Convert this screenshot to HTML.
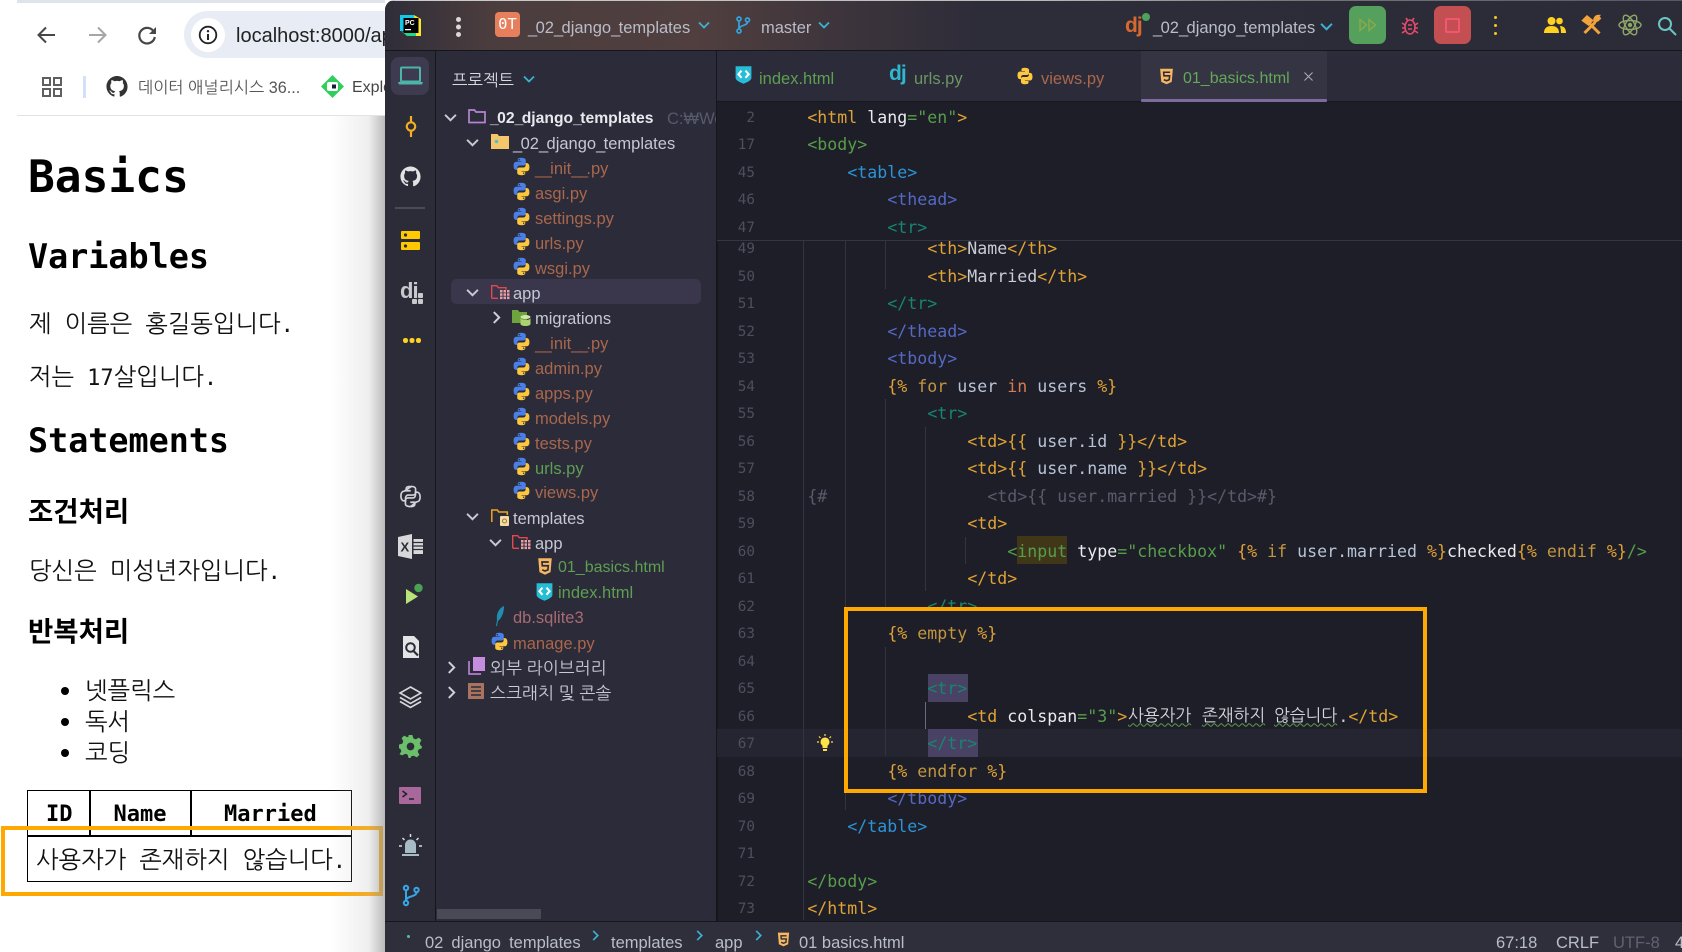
<!DOCTYPE html>
<html lang="ko"><head><meta charset="utf-8"><title>Basics</title>
<style>
html,body{margin:0;padding:0;width:1682px;height:952px;overflow:hidden;background:#fff}
body{position:relative;font-family:"Liberation Sans","NanumGothic",sans-serif}
.a{position:absolute}
.t{position:absolute;white-space:pre;line-height:28px;height:28px}
svg{position:absolute;overflow:visible}
#web .m{font-family:"DejaVu Sans Mono","NanumGothic",monospace;color:#000}
#web .k{font-family:"NanumGothic","Noto Sans CJK KR",sans-serif;font-size:24px;color:#111;margin-top:2px}
#web .sp{display:inline-block;width:13px}
#web .dot{font-family:"DejaVu Sans Mono",monospace;font-size:22px}
#ide{position:absolute;left:385px;top:0;width:1297px;height:952px;overflow:hidden;background:#1d1e28;border-top-left-radius:10px;z-index:3}
.u{color:#b9bdc9;font-size:16.5px;margin-top:1px}
.st{margin-top:2px}
.tree{color:#c5c8d2;font-size:16.5px}
.py{color:#a9674c}
.gr{color:#5e9f52}
.c{font-family:"DejaVu Sans Mono","NanumGothic",monospace;font-size:16.6px;color:#d5d8de;margin-top:1px;margin-left:-.7px}
.n{font-family:"DejaVu Sans Mono",monospace;font-size:14.3px;color:#4d4f5d;text-align:right;width:60px;left:310px;margin-top:1px}
.o{color:#e0a234}.g{color:#579e4b}.b{color:#2c93d6}.i{color:#5568c4}.e{color:#17856f}.w{color:#e9ebef}.v{color:#b7c3d6}.y{color:#c2963f}.d{color:#585b6a}.r{color:#d87a4f}.s{color:#c8ccd4}
.us{letter-spacing:-1.6px}
svg.pi{margin-top:-1.5px}
</style></head><body>
<svg width="0" height="0" style="position:absolute"><defs>
<symbol id="py" viewBox="0 0 24 24"><path fill="#4a7fe6" d="M11.9 1C7 1 7.3 3.1 7.3 3.1v2.2h4.7V6H5.4S2 5.6 2 11c0 5.4 3 5.2 3 5.2h1.8v-2.5s-.1-3 2.9-3h4.9s2.8 0 2.8-2.7V3.7S17 1 11.9 1zM9.2 2.6a.9.9 0 110 1.8.9.9 0 010-1.8z"/><path fill="#fdc83f" d="M12.1 23c4.9 0 4.6-2.1 4.6-2.1v-2.2H12V18h6.6s3.4.4 3.4-5c0-5.4-3-5.2-3-5.2h-1.8v2.5s.1 3-2.9 3H9.4s-2.8 0-2.8 2.7v4.3S7 23 12.1 23zm2.7-1.6a.9.9 0 110-1.8.9.9 0 010 1.8z"/></symbol>
<symbol id="gh" viewBox="0 0 24 24"><path fill="currentColor" d="M12 .5C5.7.5.5 5.7.5 12c0 5.1 3.3 9.4 7.9 10.9.6.1.8-.2.8-.6v-2c-3.2.7-3.9-1.5-3.9-1.5-.5-1.3-1.3-1.7-1.3-1.7-1-.7.1-.7.1-.7 1.2.1 1.8 1.2 1.8 1.2 1 1.8 2.7 1.3 3.4 1 .1-.8.4-1.3.7-1.6-2.6-.3-5.3-1.3-5.3-5.7 0-1.3.5-2.3 1.2-3.1-.1-.3-.5-1.5.1-3.1 0 0 1-.3 3.2 1.2a11 11 0 0 1 5.8 0c2.2-1.5 3.2-1.2 3.2-1.2.6 1.6.2 2.8.1 3.1.8.8 1.2 1.9 1.2 3.1 0 4.4-2.7 5.4-5.3 5.7.4.4.8 1.1.8 2.2v3.3c0 .3.2.7.8.6A11.5 11.5 0 0 0 23.5 12C23.5 5.7 18.3.5 12 .5z"/></symbol>
<symbol id="h5" viewBox="0 0 24 24"><path fill="#f6b662" d="M3 1h18l-1.6 18.5L12 23l-7.4-3.5z"/><path fill="none" stroke="#2b2b39" stroke-width="2.2" d="M17 6H8l.4 5h8l-.5 5.5L12 18l-3.8-1.5"/></symbol>
<symbol id="ix" viewBox="0 0 24 24"><path fill="#27bdd6" d="M2 1h20v14.500c0 3.500-5 5.500-10 7.500-5-2-10-4-10-7.500z"/><path fill="none" stroke="#fff" stroke-width="2.600" d="M9.500 6.500L5.500 11l4 4.500M14.500 6.500l4 4.500-4 4.500"/></symbol>
<symbol id="ch" viewBox="0 0 12 12"><path fill="none" stroke="currentColor" stroke-width="1.800" d="M1 3.500l5 5 5-5"/></symbol>
<symbol id="cr" viewBox="0 0 12 12"><path fill="none" stroke="currentColor" stroke-width="1.800" d="M3.500 1l5 5-5 5"/></symbol>
<symbol id="rf" viewBox="0 0 19 16"><path fill="none" stroke="#e3484d" stroke-width="1.400" d="M.7 14.300V1.700h5l1.600 2H15v2"/><path fill="none" stroke="#e3484d" stroke-width="1.400" d="M.7 14.300H7"/><g fill="#e9a0a4"><rect x="9" y="6" width="2.500" height="2.500"/><rect x="12.500" y="6" width="2.500" height="2.500"/><rect x="16" y="6" width="2.500" height="2.500"/><rect x="9" y="9.300" width="2.500" height="2.500"/><rect x="12.500" y="9.300" width="2.500" height="2.500"/><rect x="16" y="9.300" width="2.500" height="2.500"/><rect x="9" y="12.600" width="2.500" height="2.500"/><rect x="12.500" y="12.600" width="2.500" height="2.500"/><rect x="16" y="12.600" width="2.500" height="2.500"/></g></symbol>
</defs></svg>

<div id="web">
 <div class="a" style="left:17px;top:0;width:368px;height:3px;background:#dfe3eb"></div>
 <div class="a" style="left:17px;top:3px;width:12px;height:12px;background:#fff;border-top-left-radius:10px"></div>
 <svg style="left:35px;top:23px" width="24" height="24" viewBox="0 0 24 24" fill="none" stroke="#474747" stroke-width="2"><path d="M20 12H4M11 4.500L3.500 12l7.500 7.500"/></svg>
 <svg style="left:85px;top:23px" width="24" height="24" viewBox="0 0 24 24" fill="none" stroke="#a6a6a6" stroke-width="2"><path d="M4 12h16M13 4.500l7.500 7.500-7.500 7.500"/></svg>
 <svg style="left:135px;top:23px" width="24" height="24" viewBox="0 0 24 24" fill="none" stroke="#474747" stroke-width="2.200"><path d="M19 9a7.800 7.800 0 1 0 .8 5"/><path fill="#474747" stroke="none" d="M21 4v7h-7z"/></svg>
 <div class="a" style="left:184px;top:11px;width:240px;height:47px;background:#e8ecf5;border-radius:24px"></div>
 <div class="a" style="left:191px;top:18px;width:34px;height:34px;background:#fff;border-radius:50%"></div>
 <svg style="left:198px;top:25px" width="20" height="20" viewBox="0 0 20 20"><circle cx="10" cy="10" r="8.300" fill="none" stroke="#222" stroke-width="1.800"/><path d="M10 9v6" stroke="#222" stroke-width="2"/><circle cx="10" cy="6.200" r="1.200" fill="#222"/></svg>
 <div class="t" style="left:236px;top:22px;font-size:20px;color:#222">localhost:8000/ap</div>
 <svg style="left:42px;top:77px" width="20" height="20" viewBox="0 0 20 20" fill="none" stroke="#5f5f5f" stroke-width="2"><rect x="1" y="1" width="7" height="7"/><rect x="12" y="1" width="7" height="7"/><rect x="1" y="12" width="7" height="7"/><rect x="12" y="12" width="7" height="7"/></svg>
 <div class="a" style="left:83px;top:76px;width:3px;height:22px;background:#d3e1f8"></div>
 <svg style="left:106px;top:75px;color:#333" width="22" height="23"><use href="#gh"/></svg>
 <div class="t" style="left:138px;top:74px;font-size:16.200px;color:#555">데이터 애널리시스 36...</div>
 <svg style="left:321px;top:75px" width="23" height="23" viewBox="0 0 23 23"><path fill="#2fce5f" d="M11.500 0L23 11.500 11.500 23 0 11.500z"/><rect x="6" y="7" width="11" height="9" rx="2" fill="#fff"/><rect x="11" y="9.500" width="4" height="4" fill="#123"/></svg>
 <div class="t" style="left:352px;top:74px;font-size:16px;color:#444">Explore</div>
 <div class="a" style="left:17px;top:115px;width:368px;height:1px;background:#e3e3e3"></div>

 <div class="t m" style="left:28px;top:148px;font-size:44.500px;font-weight:bold;line-height:60px;height:60px">Basics</div>
 <div class="t m" style="left:28px;top:234px;font-size:33.400px;font-weight:bold;line-height:46px;height:46px">Variables</div>
 <div class="t m" style="left:28px;top:418px;font-size:33.400px;font-weight:bold;line-height:46px;height:46px">Statements</div>
 <div class="t k" style="left:29px;top:308px">제<span class="sp"></span>이름은<span class="sp"></span>홍길동입니다<span class="dot">.</span></div>
 <div class="t k" style="left:29px;top:361px">저는<span class="sp"></span><span class="dot">17</span>살입니다<span class="dot">.</span></div>
 <div class="t m" style="left:28px;top:495px;font-family:'Noto Sans CJK KR',sans-serif;font-size:27.500px;font-weight:bold;letter-spacing:0">조건처리</div>
 <div class="t k" style="left:29px;top:555px">당신은<span class="sp"></span>미성년자입니다<span class="dot">.</span></div>
 <div class="t m" style="left:28px;top:615px;font-family:'Noto Sans CJK KR',sans-serif;font-size:27.500px;font-weight:bold">반복처리</div>
 <div class="a" style="left:61px;top:687px;width:8px;height:8px;border-radius:50%;background:#000"></div>
 <div class="a" style="left:61px;top:718px;width:8px;height:8px;border-radius:50%;background:#000"></div>
 <div class="a" style="left:61px;top:749px;width:8px;height:8px;border-radius:50%;background:#000"></div>
 <div class="t k" style="left:85px;top:675px">넷플릭스</div>
 <div class="t k" style="left:85px;top:706px">독서</div>
 <div class="t k" style="left:85px;top:737px">코딩</div>

 <div class="a" style="left:27px;top:790px;width:323px;height:90px;border:1.500px solid #000"></div>
 <div class="a" style="left:27px;top:835px;width:325px;height:1.500px;background:#000"></div>
 <div class="a" style="left:89px;top:790px;width:1.500px;height:45px;background:#000"></div>
 <div class="a" style="left:190px;top:790px;width:1.500px;height:45px;background:#000"></div>
 <div class="t m" style="left:46px;top:801px;font-size:22px;font-weight:bold">ID</div>
 <div class="t m" style="left:113.500px;top:801px;font-size:22px;font-weight:bold">Name</div>
 <div class="t m" style="left:224px;top:801px;font-size:22px;font-weight:bold">Married</div>
 <div class="t k" style="left:36px;top:844px">사용자가<span class="sp"></span>존재하지<span class="sp"></span>않습니다<span class="dot">.</span></div>
 <div class="a" style="left:1px;top:826px;width:382px;height:70px;border:4px solid #ffa800;box-sizing:border-box"></div>
 <div class="a" style="left:330px;top:116px;width:55px;height:836px;background:linear-gradient(90deg,rgba(200,200,200,0),rgba(190,190,190,.25) 70%,rgba(150,150,150,.65))"></div>
</div>

<div id="ide">
 <div class="a" style="left:0;top:0;width:1297px;height:1px;background:linear-gradient(90deg,#ccc,#bbb 50%,#777 70%,#556 100%)"></div>
 <div class="a" style="left:0;top:1px;width:1297px;height:49px;background:linear-gradient(90deg,#2f2d39,#4b3d3e 8%,#513f3f 24%,#40363c 33%,#2d2c39 46%,#2c2c39)"></div>
 <div class="a" style="left:0;top:50px;width:1297px;height:1.500px;background:#15151c"></div>
 <div class="a" style="left:0;top:51px;width:50px;height:870px;background:#2c2c39"></div>
 <div class="a" style="left:50px;top:51px;width:1.500px;height:870px;background:#15151c"></div>
 <div class="a" style="left:51px;top:51px;width:280px;height:870px;background:#2b2b39"></div>
 <div class="a" style="left:331px;top:51px;width:1.500px;height:870px;background:#15151c"></div>
 <div class="a" style="left:332px;top:51px;width:965px;height:50px;background:#2b2b39"></div>
 <div class="a" style="left:332px;top:101px;width:965px;height:1px;background:#16161d"></div>

 <!-- title bar -->
 <svg style="left:15px;top:15px" width="21" height="21" viewBox="0 0 21 21"><path fill="#16c8e8" d="M0 0h14v6H6v10H0z"/><path fill="#fbe332" d="M14 0l7 4v17h-6z"/><path fill="#21d789" d="M1 16l6 5h9v-3H6z"/><rect x="3.500" y="3" width="15" height="15" fill="#000"/><text x="5" y="10" font-size="7" font-weight="bold" fill="#fff" font-family="Liberation Sans">PC</text><rect x="5" y="14" width="6" height="1.300" fill="#fff"/></svg>
 <div class="a" style="left:71px;top:17px;width:5px;height:5px;border-radius:50%;background:#d9d9d9;box-shadow:0 7.500px 0 #d9d9d9,0 15px 0 #d9d9d9"></div>
 <div class="a" style="left:110px;top:12px;width:25px;height:25px;background:#e87f5c;border-radius:4px;color:#fff;font:15.500px/25px 'DejaVu Sans Mono',monospace;text-align:center">0T</div>
 <div class="t u" style="left:143px;top:13px"><span class="us">_</span>02<span class="us">_</span>django<span class="us">_</span>templates</div>
 <svg style="left:313px;top:19px;color:#3ab3d3" width="12" height="12"><use href="#ch"/></svg>
 <svg style="left:350px;top:16px" width="16" height="18" viewBox="0 0 16 18" fill="none" stroke="#34a3dc" stroke-width="1.700"><circle cx="4" cy="3" r="2"/><circle cx="4" cy="15" r="2"/><circle cx="12.500" cy="4" r="2"/><path d="M4 5v8M12.500 6c0 4-8.500 3-8.500 7"/></svg>
 <div class="t u" style="left:376px;top:13px">master</div>
 <svg style="left:433px;top:19px;color:#3ab3d3" width="12" height="12"><use href="#ch"/></svg>
 <div class="t" style="left:740px;top:12px;color:#d8692e;font:bold 21px/28px 'Liberation Sans',sans-serif;letter-spacing:-1px">dj</div>
 <div class="a" style="left:757px;top:13px;width:8px;height:8px;border-radius:50%;background:#4ca35a"></div>
 <div class="t u" style="left:768px;top:13px"><span class="us">_</span>02<span class="us">_</span>django<span class="us">_</span>templates</div>
 <svg style="left:935px;top:20px;color:#3ab3d3" width="13" height="13"><use href="#ch"/></svg>
 <div class="a" style="left:964px;top:6px;width:37px;height:38px;border-radius:7px;background:#55a05c"></div>
 <svg style="left:974px;top:18px" width="18" height="14" viewBox="0 0 18 14" fill="none" stroke="#86ab4b" stroke-width="1.500"><path d="M1 1.500l6.500 5.500L1 12.500zM10 1.500l6.500 5.500-6.500 5.500z"/></svg>
 <svg style="left:1016px;top:16px" width="18" height="20" viewBox="0 0 18 20" fill="none" stroke="#e74a6b" stroke-width="1.600"><ellipse cx="9" cy="11" rx="5" ry="7"/><path d="M5 2l2 3M13 2l-2 3M1 7l3 2M17 7l-3 2M1 12h3M17 12h-3M1 17l3-2M17 17l-3-2M7 9h4M7 13h4"/></svg>
 <div class="a" style="left:1049px;top:6px;width:37px;height:38px;border-radius:7px;background:#c44f52"></div>
 <div class="a" style="left:1060px;top:18px;width:11px;height:11px;border:2px solid #f3566f;border-radius:2px"></div>
 <div class="a" style="left:1108.500px;top:16px;width:3px;height:3px;border-radius:50%;background:#f2c91c;box-shadow:0 8px 0 #f2c91c,0 16px 0 #f2c91c"></div>
 <svg style="left:1159px;top:16px" width="22" height="18" viewBox="0 0 22 18" fill="#ffd21f"><circle cx="7.500" cy="5" r="4"/><circle cx="15.500" cy="5" r="3.300"/><path d="M0 17c0-5 3-7 7.500-7s7.500 2 7.500 7zM16 10c4 0 6 2.500 6 7h-5c0-3-.5-5-1-7z"/></svg>
 <svg style="left:1197px;top:15px" width="20" height="20" viewBox="0 0 20 20" fill="none" stroke="#f2a33c"><path stroke-width="3" d="M7 8L17.500 18.500"/><path stroke-width="2.200" d="M1 5.500L5 1.500l5 4-3.500 4z" fill="#f2a33c"/><path stroke-width="3" d="M13 7.500L2.500 18"/><path stroke-width="2.400" d="M18.500 2.500l-2.500 2.500-1.500-1.500 2-2.500a4 4 0 0 0-3.500 6z"/></svg>
 <svg style="left:1233px;top:13px" width="24" height="24" viewBox="0 0 24 24" fill="none" stroke="#8ea667" stroke-width="1.400"><ellipse cx="12" cy="12" rx="11" ry="4.500"/><ellipse cx="12" cy="12" rx="11" ry="4.500" transform="rotate(60 12 12)"/><ellipse cx="12" cy="12" rx="11" ry="4.500" transform="rotate(120 12 12)"/><circle cx="12" cy="12" r="1.500" fill="#8ea667"/></svg>
 <svg style="left:1272px;top:16px" width="20" height="20" viewBox="0 0 20 20" fill="none" stroke="#6cc5c4" stroke-width="2"><circle cx="8" cy="8" r="6"/><path d="M12.500 12.500L19 19"/></svg>

 <!-- left stripe -->
 <div class="a" style="left:6px;top:57px;width:38px;height:38px;border-radius:8px;background:#3e3a50"></div>
 <svg style="left:13px;top:66px" width="25" height="20" viewBox="0 0 25 20"><rect x="3" y="1.500" width="19" height="14" rx="1" fill="none" stroke="#4ab5a8" stroke-width="2"/><path fill="#4ab5a8" d="M0 16h25l-1 2.500H1z"/></svg>
 <svg style="left:19px;top:116px" width="14" height="21" viewBox="0 0 14 21" fill="none" stroke="#f3ae22" stroke-width="2.200"><circle cx="7" cy="10.500" r="4.200"/><path d="M7 0v6M7 15v6"/></svg>
 <svg style="left:15px;top:166px;color:#e2e2e4" width="21" height="21"><use href="#gh"/></svg>
 <div class="a" style="left:10px;top:207px;width:30px;height:2px;background:#4a4a59"></div>
 <svg style="left:16px;top:231px" width="19" height="19" viewBox="0 0 19 19" fill="#ffc800"><rect width="19" height="8" rx="1"/><rect y="11" width="19" height="8" rx="1"/><circle cx="4.500" cy="4" r="1.600" fill="#2c2c39"/><circle cx="4.500" cy="15" r="1.600" fill="#2c2c39"/></svg>
 <div class="t" style="left:15px;top:277px;color:#c8c9cd;font:bold 22px/28px 'Liberation Sans',sans-serif;letter-spacing:-1px">di</div>
 <div class="a" style="left:33px;top:293px;width:5px;height:5px;background:#c8c9cd;border-radius:1px;box-shadow:-6px 6px 0 #c8c9cd,0 6px 0 #c8c9cd"></div>
 <div class="a" style="left:18px;top:338px;width:4.500px;height:4.500px;border-radius:50%;background:#ffd21f;box-shadow:6.500px 0 0 #ffd21f,13px 0 0 #ffd21f"></div>
 <svg style="left:14px;top:485px" width="23" height="23" viewBox="0 0 24 24" fill="none" stroke="#d3d4d8" stroke-width="1.700"><path d="M11.900 1.500C7.500 1.500 7.500 3.500 7.500 3.500v2.500h4.700M5.400 6.500C4 6.500 2 7.500 2 11.500s2 5 3 5h1.800v-2.500s0-3.500 3-3.500h4.700s2.800 0 2.800-2.500V4s0-2.500-4.400-2.500z"/><path d="M12.100 22.500c4.400 0 4.400-2 4.400-2V18h-4.700M18.600 17.500c1.400 0 3.400-1 3.400-5s-2-5-3-5h-1.800V10s0 3.500-3 3.500H9.500s-2.800 0-2.800 2.500v4s0 2.500 5.400 2.500z"/></svg>
 <svg style="left:13px;top:534px" width="25" height="25" viewBox="0 0 25 25"><path fill="#d8d8db" d="M0 3l14-3v25L0 22z"/><text x="2.500" y="17.500" font-size="13" font-weight="bold" fill="#2c2c39" font-family="Liberation Sans">X</text><rect x="15.500" y="5" width="9.500" height="15" fill="#d8d8db"/><path stroke="#2c2c39" stroke-width="1.200" d="M15.500 8.500h9.500M15.500 12h9.500M15.500 15.500h9.500"/></svg>
 <svg style="left:21px;top:584px" width="17" height="21" viewBox="0 0 17 21"><path fill="#b7e479" d="M0 5l12 7.500L0 20z"/><circle cx="12.500" cy="4" r="4.200" fill="#4aa152"/></svg>
 <svg style="left:17px;top:636px" width="18" height="22" viewBox="0 0 18 22"><path fill="#e4e4e6" d="M1 0h11l5 5v17H1z"/><circle cx="8.500" cy="11.500" r="4.300" fill="none" stroke="#2c2c39" stroke-width="2"/><path d="M11.500 15l4.500 4.500" stroke="#2c2c39" stroke-width="2.200"/></svg>
 <svg style="left:14px;top:686px" width="23" height="22" viewBox="0 0 23 22" fill="none" stroke="#d8d8dc" stroke-width="1.600"><path d="M11.500 1L22 7l-10.500 6L1 7z"/><path d="M1 11.500l10.500 6 10.500-6M1 15.500l10.500 6 10.500-6"/></svg>
 <svg style="left:14px;top:735px" width="23" height="23" viewBox="0 0 24 24"><path fill="#6bbf6a" d="M10 0h4l1 3.500 2.500 1 3.200-1.800 2.700 2.700-1.800 3.200 1 2.500L24 12v0l-.4 2-3.100 1-1 2.500 1.800 3.200-2.700 2.700-3.200-1.800-2.400.4-1 2H10l-1-3.500-2.500-1-3.200 1.800L.6 20.100l1.800-3.200-1-2.500L0 14v-4l3.500-1 1-2.500L2.700 3.300l2.700-2.700 3.200 1.800 1.400-.9z"/><circle cx="12" cy="12" r="4" fill="#2c2c39"/></svg>
 <div class="a" style="left:14px;top:787px;width:22px;height:17px;background:#a9689c;border-radius:1px"></div>
 <svg style="left:17px;top:790px" width="16" height="11" viewBox="0 0 16 11" fill="none" stroke="#222" stroke-width="1.500"><path d="M.5 1l4 3-4 3M7 9h5"/></svg>
 <svg style="left:14px;top:834px" width="23" height="24" viewBox="0 0 23 24"><path fill="#a8bcc6" d="M6 19v-8a5.500 5.500 0 0 1 11 0v8z"/><rect x="3" y="20" width="17" height="2" fill="#a8bcc6"/><path stroke="#d4dde2" stroke-width="1.500" d="M0 12h3M20 12h3M3.500 4l2 2M19.500 4l-2 2M11.500 0v3"/></svg>
 <svg style="left:17px;top:885px" width="18" height="21" viewBox="0 0 18 21" fill="none" stroke="#35a7e6" stroke-width="2"><circle cx="4" cy="3" r="2.200"/><circle cx="4" cy="18" r="2.200"/><circle cx="14.500" cy="5" r="2.200"/><path d="M4 5.200v10.600M14.500 7.200c0 5-10.500 3.500-10.500 8.600"/></svg>

 <!-- project panel -->
 <div class="t" style="left:67px;top:67px;color:#d8dae2;font:16.500px/28px 'NanumGothic','Noto Sans CJK KR',sans-serif">프로젝트</div>
 <svg style="left:138px;top:73px;color:#3ab3d3" width="12" height="12"><use href="#ch"/></svg>
 <div class="a" style="left:66px;top:279px;width:250px;height:25px;border-radius:5px;background:#3a364b"></div>

 <svg style="left:59px;top:111px;color:#c8c9d0" width="13" height="13"><use href="#ch"/></svg>
 <svg style="left:83px;top:108px" width="18" height="16" viewBox="0 0 18 16" fill="none" stroke="#b685d2" stroke-width="1.700"><path d="M1 14.500V2h5.500l1.500 2h9v10.500z"/></svg>
 <div class="t" style="left:105px;top:105px;color:#e8e9ee;font-size:15.700px;font-weight:bold"><span class="us">_</span>02<span class="us">_</span>django<span class="us">_</span>templates</div>
 <div class="t" style="left:282px;top:105px;width:49px;overflow:hidden;color:#575a6a;font-size:16.500px">C:₩Work</div>

 <svg style="left:81px;top:136px;color:#c8c9d0" width="13" height="13"><use href="#ch"/></svg>
 <svg style="left:106px;top:134px" width="18" height="15" viewBox="0 0 18 15"><path fill="#f6c76a" d="M0 15V0h6.500l1.500 2h10v13z"/><circle cx="5.500" cy="7.500" r="1.800" fill="#4fc0cf"/></svg>
 <div class="t tree" style="left:128px;top:130px"><span class="us">_</span>02<span class="us">_</span>django<span class="us">_</span>templates</div>

 <svg class="pi" style="left:127px;top:158px" width="19" height="19"><use href="#py"/></svg><div class="t tree py" style="left:150px;top:155px"><span class="us">__</span>init<span class="us">__</span>.py</div>
 <svg class="pi" style="left:127px;top:183px" width="19" height="19"><use href="#py"/></svg><div class="t tree py" style="left:150px;top:180px">asgi.py</div>
 <svg class="pi" style="left:127px;top:208px" width="19" height="19"><use href="#py"/></svg><div class="t tree py" style="left:150px;top:205px">settings.py</div>
 <svg class="pi" style="left:127px;top:233px" width="19" height="19"><use href="#py"/></svg><div class="t tree py" style="left:150px;top:230px">urls.py</div>
 <svg class="pi" style="left:127px;top:258px" width="19" height="19"><use href="#py"/></svg><div class="t tree py" style="left:150px;top:255px">wsgi.py</div>

 <svg style="left:81px;top:286px;color:#c8c9d0" width="13" height="13"><use href="#ch"/></svg>
 <svg style="left:106px;top:284px" width="19" height="16"><use href="#rf"/></svg>
 <div class="t tree" style="left:128px;top:280px">app</div>

 <svg style="left:105px;top:311px;color:#d0d1d8" width="13" height="13"><use href="#cr"/></svg>
 <svg style="left:127px;top:309px" width="19" height="18" viewBox="0 0 19 18"><path fill="#6fa33d" d="M0 14V1h6l1.500 2H15v11z"/><ellipse cx="13.500" cy="8" rx="5" ry="2" fill="#cfe8a9"/><path fill="#a9d46f" d="M8.500 9v6c0 1 2 2 5 2s5-1 5-2V9c0 1-2 2-5 2s-5-1-5-2z"/></svg>
 <div class="t tree" style="left:150px;top:305px">migrations</div>

 <svg class="pi" style="left:127px;top:333px" width="19" height="19"><use href="#py"/></svg><div class="t tree py" style="left:150px;top:330px"><span class="us">__</span>init<span class="us">__</span>.py</div>
 <svg class="pi" style="left:127px;top:358px" width="19" height="19"><use href="#py"/></svg><div class="t tree py" style="left:150px;top:355px">admin.py</div>
 <svg class="pi" style="left:127px;top:383px" width="19" height="19"><use href="#py"/></svg><div class="t tree py" style="left:150px;top:380px">apps.py</div>
 <svg class="pi" style="left:127px;top:408px" width="19" height="19"><use href="#py"/></svg><div class="t tree py" style="left:150px;top:405px">models.py</div>
 <svg class="pi" style="left:127px;top:433px" width="19" height="19"><use href="#py"/></svg><div class="t tree py" style="left:150px;top:430px">tests.py</div>
 <svg class="pi" style="left:127px;top:458px" width="19" height="19"><use href="#py"/></svg><div class="t tree gr" style="left:150px;top:455px">urls.py</div>
 <svg class="pi" style="left:127px;top:482px" width="19" height="19"><use href="#py"/></svg><div class="t tree py" style="left:150px;top:479px">views.py</div>

 <svg style="left:81px;top:510px;color:#c8c9d0" width="13" height="13"><use href="#ch"/></svg>
 <svg style="left:106px;top:509px" width="18" height="17" viewBox="0 0 18 17"><path fill="none" stroke="#f2a51e" stroke-width="1.500" d="M.8 13V1h5.500l1.500 2h8.500v3"/><rect x="9" y="7" width="9" height="10" rx="1" fill="#f4dca9"/><circle cx="13.500" cy="12" r="2" fill="none" stroke="#a47a2c" stroke-width="1"/></svg>
 <div class="t tree" style="left:128px;top:505px">templates</div>

 <svg style="left:104px;top:536px;color:#c8c9d0" width="13" height="13"><use href="#ch"/></svg>
 <svg style="left:127px;top:534px" width="19" height="16"><use href="#rf"/></svg>
 <div class="t tree" style="left:150px;top:530px">app</div>

 <svg style="left:151px;top:557px" width="18" height="19"><use href="#h5"/></svg><div class="t tree gr" style="left:173px;top:554px;font-size:16px">01_basics.html</div>
 <svg style="left:150px;top:582px" width="19" height="20"><use href="#ix"/></svg><div class="t tree gr" style="left:173px;top:579px">index.html</div>

 <svg style="left:110px;top:606px" width="10" height="20" viewBox="0 0 10 20"><path fill="#1f8fb0" d="M9 0C4 2 1 8 2 14l-1 6 1 0 1-5c4-3 6-9 6-15z"/></svg>
 <div class="t tree" style="left:128px;top:604px;color:#a86a72">db.sqlite3</div>
 <svg style="left:105px;top:632px" width="19" height="19"><use href="#py"/></svg><div class="t tree py" style="left:128px;top:630px">manage.py</div>

 <svg style="left:60px;top:661px;color:#d0d1d8" width="13" height="13"><use href="#cr"/></svg>
 <svg style="left:83px;top:657px" width="17" height="18" viewBox="0 0 17 18"><path fill="#c58ce0" d="M5 0h12v14H5z"/><path fill="none" stroke="#c58ce0" stroke-width="1.500" d="M1 4v13h12"/></svg>
 <div class="t" style="left:105px;top:655px;color:#c8cad4;font:17px/28px 'NanumGothic','Noto Sans CJK KR',sans-serif">외부 라이브러리</div>
 <svg style="left:60px;top:686px;color:#d0d1d8" width="13" height="13"><use href="#cr"/></svg>
 <svg style="left:83px;top:683px" width="16" height="16" viewBox="0 0 16 16"><rect width="16" height="16" fill="#a9745f"/><path stroke="#2b2b39" stroke-width="1.400" d="M3 4h10M3 8h10M3 12h10"/></svg>
 <div class="t" style="left:105px;top:680px;color:#c8cad4;font:17px/28px 'NanumGothic','Noto Sans CJK KR',sans-serif">스크래치 및 콘솔</div>
 <div class="a" style="left:52px;top:909px;width:104px;height:10px;background:#4a4a57"></div>

 <!-- tabs -->
 <svg style="left:349px;top:64px" width="19" height="22"><use href="#ix"/></svg>
 <div class="t tree" style="left:374px;top:65px;color:#5e9f52">index.html</div>
 <div class="t" style="left:504px;top:60px;color:#2fb7cf;font:bold 21px/28px 'Liberation Sans',sans-serif;letter-spacing:-1px">dj</div>
 <div class="t tree" style="left:529px;top:65px;color:#6b9761">urls.py</div>
 <svg style="left:631px;top:67px" width="18" height="18" viewBox="0 0 24 24"><path fill="#fdc83f" d="M11.900 1C7 1 7.300 3.100 7.300 3.100v2.200h4.700V6H5.400S2 5.600 2 11c0 5.400 3 5.200 3 5.200h1.800v-2.500s-.1-3 2.900-3h4.900s2.800 0 2.800-2.700V3.700S17 1 11.900 1z"/><path fill="#fdc83f" d="M12.100 23c4.900 0 4.600-2.100 4.600-2.100v-2.200H12V18h6.600s3.400.4 3.400-5c0-5.400-3-5.200-3-5.200h-1.800v2.500s.1 3-2.900 3H9.400s-2.800 0-2.800 2.700v4.300S7 23 12.100 23z"/></svg>
 <div class="t tree py" style="left:656px;top:65px">views.py</div>
 <div class="a" style="left:756px;top:51px;width:186px;height:48px;background:#343443"></div>
 <div class="a" style="left:756px;top:99px;width:186px;height:3px;background:#7e6b9e;border-radius:1px"></div>
 <svg style="left:773px;top:67px" width="17" height="19"><use href="#h5"/></svg>
 <div class="t tree" style="left:798px;top:65px;color:#64a858;font-size:16px">01_basics.html</div>
 <svg style="left:919px;top:72px" width="9" height="9" viewBox="0 0 10 10" stroke="#a9aab5" stroke-width="1.200"><path d="M.5.500l9 9M9.500.500l-9 9"/></svg>

 <!-- editor -->
 <div class="a" style="left:332px;top:729px;width:965px;height:27.500px;background:#252532"></div>
 <div class="a" style="left:418px;top:240px;width:1.200px;height:680px;background:#33343f"></div>
 <div class="a" style="left:460px;top:240px;width:1.200px;height:570px;background:#33343f"></div>
 <div class="a" style="left:500px;top:240px;width:1.200px;height:49px;background:#33343f"></div>
 <div class="a" style="left:500px;top:399px;width:1.200px;height:219px;background:#33343f"></div>
 <div class="a" style="left:500px;top:647px;width:1.200px;height:109px;background:#33343f"></div>
 <div class="a" style="left:540px;top:427px;width:1.200px;height:164px;background:#33343f"></div>
 <div class="a" style="left:540px;top:702px;width:1.200px;height:27px;background:#6a6a85"></div>
 <div class="a" style="left:580px;top:537px;width:1.200px;height:27px;background:#33343f"></div>
 <div class="a" style="left:543px;top:674px;width:40px;height:27.500px;background:#4a4264"></div>
 <div class="a" style="left:543px;top:729px;width:50px;height:27.500px;background:#4a4264"></div>
 <div class="a" style="left:632px;top:536px;width:50px;height:28px;background:#3f3718"></div>

 <div class="t n" style="top:234px">49</div><div class="t c" style="left:543px;top:234px"><span class="o">&lt;th&gt;</span><span class="s">Name</span><span class="o">&lt;/th&gt;</span></div>
 <div class="t n" style="top:261.500px">50</div><div class="t c" style="left:543px;top:261.500px"><span class="o">&lt;th&gt;</span><span class="s">Married</span><span class="o">&lt;/th&gt;</span></div>
 <div class="t n" style="top:289px">51</div><div class="t c e" style="left:503px;top:289px;color:#17856f">&lt;/tr&gt;</div>
 <div class="t n" style="top:316.500px">52</div><div class="t c" style="left:503px;top:316.500px;color:#5568c4">&lt;/thead&gt;</div>
 <div class="t n" style="top:344px">53</div><div class="t c" style="left:503px;top:344px;color:#5568c4">&lt;tbody&gt;</div>
 <div class="t n" style="top:371.500px">54</div><div class="t c" style="left:503px;top:371.500px"><span class="o">{%</span> <span class="y">for</span> <span class="v">user</span> <span class="r">in</span> <span class="v">users</span> <span class="o">%}</span></div>
 <div class="t n" style="top:399px">55</div><div class="t c" style="left:543px;top:399px;color:#17856f">&lt;tr&gt;</div>
 <div class="t n" style="top:426.500px">56</div><div class="t c" style="left:583px;top:426.500px"><span class="o">&lt;td&gt;{{</span> <span class="v">user.id</span> <span class="o">}}&lt;/td&gt;</span></div>
 <div class="t n" style="top:454px">57</div><div class="t c" style="left:583px;top:454px"><span class="o">&lt;td&gt;{{</span> <span class="v">user.name</span> <span class="o">}}&lt;/td&gt;</span></div>
 <div class="t n" style="top:481.500px">58</div><div class="t c d" style="left:423px;top:481.500px;color:#585b6a">{#</div><div class="t c" style="left:603px;top:481.500px;color:#585b6a">&lt;td&gt;{{ user.married }}&lt;/td&gt;#}</div>
 <div class="t n" style="top:509px">59</div><div class="t c" style="left:583px;top:509px;color:#e0a234">&lt;td&gt;</div>
 <div class="t n" style="top:536.500px">60</div><div class="t c" style="left:623px;top:536.500px"><span class="g">&lt;input</span> <span class="w">type</span><span class="g">="checkbox"</span> <span class="o">{%</span> <span class="y">if</span> <span class="v">user.married</span> <span class="o">%}</span><span class="w">checked</span><span class="o">{%</span> <span class="y">endif</span> <span class="o">%}</span><span class="g">/&gt;</span></div>
 <div class="t n" style="top:564px">61</div><div class="t c" style="left:583px;top:564px;color:#e0a234">&lt;/td&gt;</div>
 <div class="t n" style="top:591.500px">62</div><div class="t c" style="left:543px;top:591.500px;color:#17856f">&lt;/tr&gt;</div>
 <div class="a" style="left:460px;top:611px;width:578px;height:12px;background:#1d1e28"></div>
 <div class="t n" style="top:619px">63</div><div class="t c" style="left:503px;top:619px"><span class="o">{%</span> <span class="y">empty</span> <span class="o">%}</span></div>
 <div class="t n" style="top:646.500px">64</div>
 <div class="t n" style="top:674px">65</div><div class="t c" style="left:543px;top:674px;color:#17856f">&lt;tr&gt;</div>
 <div class="t n" style="top:701.500px">66</div><div class="t c" style="left:583px;top:701.500px"><span class="o">&lt;td</span> <span class="w">colspan</span><span class="g">="3"</span><span class="o">&gt;</span></div>
 <div class="t" id="kr" style="left:743px;top:701.500px;color:#d5d8de;font:16.800px/28px 'NanumGothic','Noto Sans CJK KR',sans-serif;text-decoration:underline wavy #5d9a4e 1px;text-underline-offset:2px">사용자가</div>
 <div class="t" style="left:817px;top:701.500px;color:#d5d8de;font:16.800px/28px 'NanumGothic','Noto Sans CJK KR',sans-serif;text-decoration:underline wavy #5d9a4e 1px;text-underline-offset:2px">존재하지</div>
 <div class="t" style="left:889px;top:701.500px;color:#d5d8de;font:16.800px/28px 'NanumGothic','Noto Sans CJK KR',sans-serif;text-decoration:underline wavy #5d9a4e 1px;text-underline-offset:2px">않습니다</div>
 <div class="t c" style="left:954px;top:701.500px"><span class="s">.</span><span class="o">&lt;/td&gt;</span></div>
 <div class="t n" style="top:729px">67</div><div class="t c" style="left:543px;top:729px;color:#17856f">&lt;/tr&gt;</div>
 <svg style="left:431px;top:734px" width="18" height="18" viewBox="0 0 18 18"><path fill="#ffe14a" d="M9 3.500a4.500 4.500 0 0 0-2.500 8.200V14h5v-2.300A4.500 4.500 0 0 0 9 3.500z"/><rect x="7" y="15" width="4" height="2" fill="#ffe14a"/><path stroke="#ffe14a" stroke-width="1.200" d="M9 0v2M1 8h2M15 8h2M3 2.500l1.500 1.500M15 2.500L13.500 4"/></svg>
 <div class="t n" style="top:756.500px">68</div><div class="t c" style="left:503px;top:756.500px"><span class="o">{%</span> <span class="y">endfor</span> <span class="o">%}</span></div>
 <div class="t n" style="top:784px">69</div><div class="t c" style="left:503px;top:784px;color:#5568c4">&lt;/tbody&gt;</div>
 <div class="t n" style="top:811.500px">70</div><div class="t c" style="left:463px;top:811.500px;color:#2c93d6">&lt;/table&gt;</div>
 <div class="t n" style="top:839px">71</div>
 <div class="t n" style="top:866.500px">72</div><div class="t c" style="left:423px;top:866.500px;color:#579e4b">&lt;/body&gt;</div>
 <div class="t n" style="top:894px">73</div><div class="t c" style="left:423px;top:894px;color:#e0a234">&lt;/html&gt;</div>

 <!-- sticky -->
 <div class="a" style="left:332px;top:102px;width:965px;height:138px;background:#1d1e28"></div>
 <div class="a" style="left:332px;top:240px;width:965px;height:1px;background:#353641"></div>
 <div class="t n" style="top:103px">2</div><div class="t c" style="left:423px;top:103px"><span class="o">&lt;html</span> <span class="w">lang</span><span class="g">="en"</span><span class="o">&gt;</span></div>
 <div class="t n" style="top:130px">17</div><div class="t c" style="left:423px;top:130px;color:#579e4b">&lt;body&gt;</div>
 <div class="t n" style="top:158px">45</div><div class="t c" style="left:463px;top:158px;color:#2c93d6">&lt;table&gt;</div>
 <div class="t n" style="top:185px">46</div><div class="t c" style="left:503px;top:185px;color:#5568c4">&lt;thead&gt;</div>
 <div class="t n" style="top:213px">47</div><div class="t c" style="left:503px;top:213px;color:#17856f">&lt;tr&gt;</div>

 <!-- status bar -->
 <div class="a" style="left:0;top:921px;width:1297px;height:31px;background:#2f2f3c;border-top:1.500px solid #16161d;box-sizing:border-box"></div>
 <div class="a" style="left:22px;top:935px;width:3px;height:3px;border-radius:50%;background:#4bc0b0"></div>
 <div class="t u st" style="left:40px;top:927px;word-spacing:3.500px">02 django templates</div>
 <svg style="left:205px;top:930px;color:#3ab3d3" width="11" height="11"><use href="#cr"/></svg>
 <div class="t u st" style="left:226px;top:927px">templates</div>
 <svg style="left:309px;top:930px;color:#3ab3d3" width="11" height="11"><use href="#cr"/></svg>
 <div class="t u st" style="left:330px;top:927px">app</div>
 <svg style="left:368px;top:930px;color:#3ab3d3" width="11" height="11"><use href="#cr"/></svg>
 <svg style="left:391px;top:931px" width="15" height="17"><use href="#h5"/></svg>
 <div class="t u st" style="left:414px;top:927px">01 basics.html</div>
 <div class="t u st" style="left:1111px;top:927px">67:18</div>
 <div class="t u st" style="left:1171px;top:927px">CRLF</div>
 <div class="t u st" style="left:1228px;top:927px;color:#5f6272">UTF-8</div>
 <div class="t u st" style="left:1290px;top:927px">4</div>

 <!-- annotation -->
 <div class="a" style="left:459px;top:607px;width:583px;height:186px;border:4px solid #ffa800;box-sizing:border-box"></div>
</div>
</body></html>
